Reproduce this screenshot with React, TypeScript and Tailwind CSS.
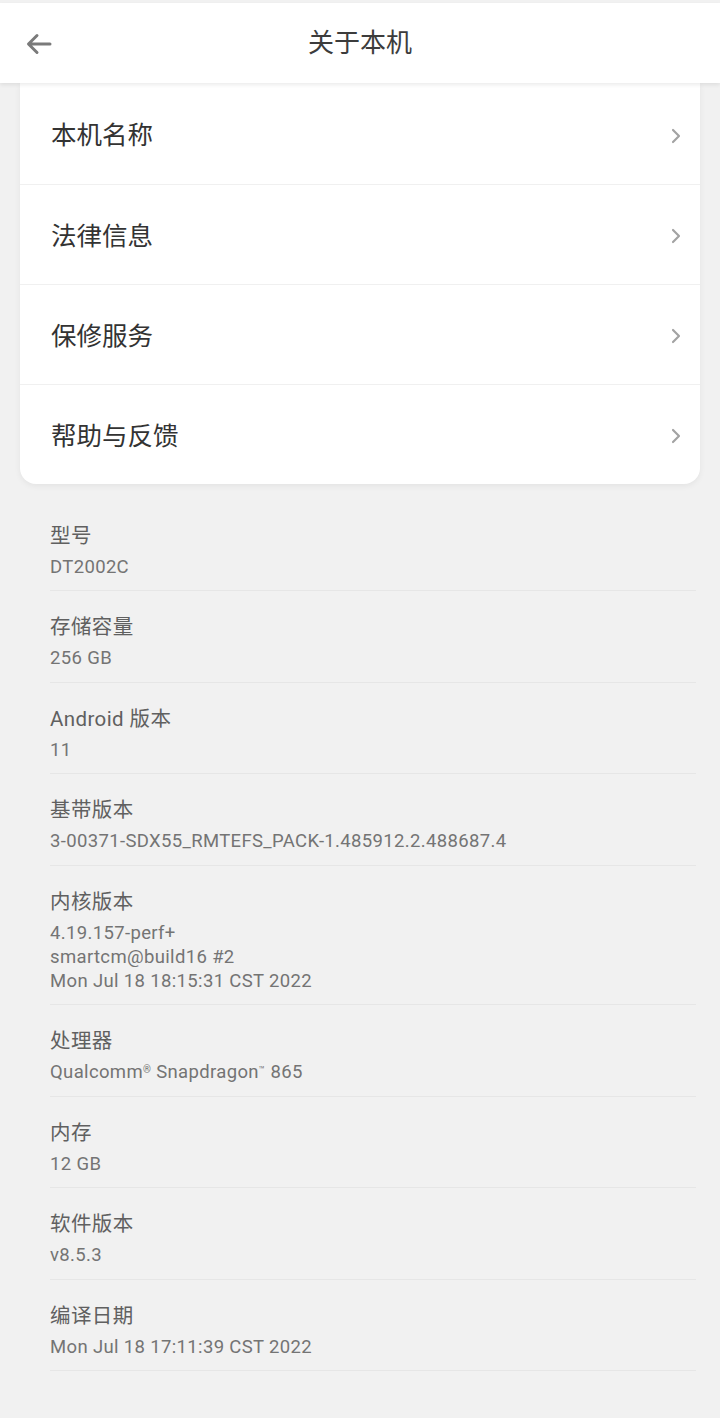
import { ReactNode } from 'react';

const FONT = { fontFamily: 'Roboto, "Noto Sans CJK SC", sans-serif' };

const menuItems = ['本机名称', '法律信息', '保修服务', '帮助与反馈'];

const specs: { label: string; value: ReactNode[] }[] = [
    { label: '型号', value: ['DT2002C'] },
    { label: '存储容量', value: ['256 GB'] },
    { label: 'Android 版本', value: ['11'] },
    { label: '基带版本', value: ['3-00371-SDX55_RMTEFS_PACK-1.485912.2.488687.4'] },
    {
        label: '内核版本',
        value: ['4.19.157-perf+', 'smartcm@build16 #2', 'Mon Jul 18 18:15:31 CST 2022'],
    },
    {
        label: '处理器',
        value: [
            <>
                Qualcomm<sup className="text-[10px]">®</sup> Snapdragon<sup className="text-[10px]">™</sup> 865
            </>,
        ],
    },
    { label: '内存', value: ['12 GB'] },
    { label: '软件版本', value: ['v8.5.3'] },
    { label: '编译日期', value: ['Mon Jul 18 17:11:39 CST 2022'] },
];

const Chevron = () => (
    <svg width="12" height="18" viewBox="0 0 12 18" fill="none">
        <path d="M3 3l6 6-6 6" stroke="#a3a3a3" strokeWidth="2.2" strokeLinecap="round" strokeLinejoin="round" />
    </svg>
);

const BackArrow = () => (
    <svg width="26" height="22" viewBox="0 0 26 22" fill="none">
        <path
            d="M24 11H3M11 2.5L2.5 11 11 19.5"
            stroke="#7a7a7a"
            strokeWidth="3"
            strokeLinecap="round"
            strokeLinejoin="round"
        />
    </svg>
);

export default function App() {
    return (
        <div className="min-h-[1418px] w-[720px] bg-[#f1f1f1] pt-[3px]" style={FONT}>
            <header className="relative z-10 flex h-[80px] items-center justify-center bg-white shadow-[0_2px_4px_rgba(0,0,0,0.08)]">
                <div className="absolute left-[26px] top-[30px]">
                    <BackArrow />
                </div>
                <h1 className="text-[26px] text-[#3c3c3c]">关于本机</h1>
            </header>

            <div className="mx-[20px] overflow-hidden rounded-b-[16px] bg-white pt-[1px] shadow-[0_2px_6px_rgba(0,0,0,0.06)]">
                {menuItems.map((item, i) => (
                    <div
                        key={item}
                        className={`flex h-[100px] items-center justify-between pt-[3px] pl-[31px] pr-[18px] ${
                            i > 0 ? 'border-t border-[#f0f0f0]' : ''
                        }`}
                    >
                        <span className="text-[25.5px] text-[#333]">{item}</span>
                        <Chevron />
                    </div>
                ))}
            </div>

            <div className="ml-[50px] mr-[24px] pt-[15.5px]">
                {specs.map((spec) => (
                    <div key={spec.label} className="border-b border-[#e6e6e6] pt-[22px] pb-[11.3px]">
                        <div className="text-[20.5px] leading-[28px] tracking-[0.4px] text-[#606060]">{spec.label}</div>
                        <div className="mt-[5px] text-[18.5px] leading-[24.2px] tracking-[0.35px] text-[#747474]">
                            {spec.value.map((line, j) => (
                                <div key={j}>{line}</div>
                            ))}
                        </div>
                    </div>
                ))}
            </div>
        </div>
    );
}
